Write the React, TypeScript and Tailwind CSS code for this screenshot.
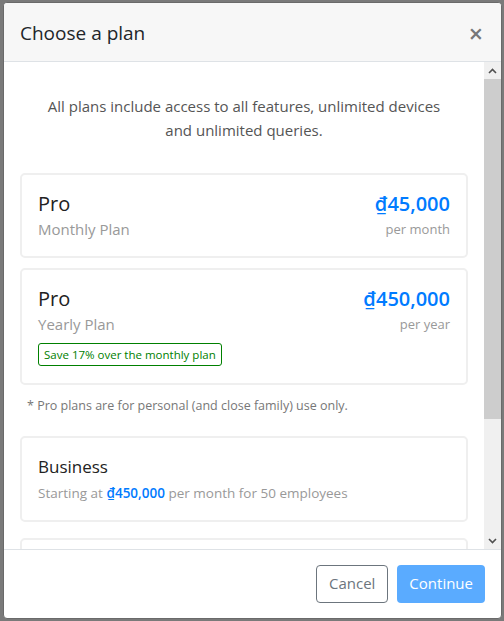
import React from "react";

const font = { fontFamily: '"Open Sans", "Noto Sans", sans-serif' };

function ScrollBar() {
  return (
    <div className="w-[17px] shrink-0 bg-[#f0f0f0] flex flex-col">
      <div className="h-[17px] flex items-center justify-center">
        <svg width="9" height="6" viewBox="0 0 9 6"><path d="M1 5 L4.5 1.5 L8 5" stroke="#505050" strokeWidth="1.6" fill="none" /></svg>
      </div>
      <div className="h-[340px] bg-[#cdcdcd]" />
      <div className="flex-1" />
      <div className="h-[17px] flex items-center justify-center">
        <svg width="9" height="6" viewBox="0 0 9 6"><path d="M1 1 L4.5 4.5 L8 1" stroke="#505050" strokeWidth="1.6" fill="none" /></svg>
      </div>
    </div>
  );
}

export default function App() {
  return (
    <div className="h-[621px] w-[504px] bg-[#7a7a7a] pt-[2px] pl-[3px] overflow-hidden" style={font}>
      <div className="w-[499px] h-[617px] bg-white border border-[#6a6a6a] rounded-[4px] flex flex-col overflow-hidden">
        <div className="h-[59px] shrink-0 bg-[#f7f7f7] border-b border-[#dee2e6] flex items-center justify-between pl-[16px] pr-[16px]">
          <div className="text-[19px] text-[#212529] leading-[28px] pt-[2px]">Choose a plan</div>
          <div className="text-[25px] text-[#777] leading-none font-semibold pr-[2px] pt-[2px]">×</div>
        </div>
        <div className="h-[487px] shrink-0 flex">
          <div className="flex-1 overflow-hidden px-[16px]">
            <p className="text-center text-[15px] leading-[24px] text-[#555] pt-[32px] pb-[31px] px-[24px]">
              All plans include access to all features, unlimited devices and unlimited queries.
            </p>
            <div className="border-2 border-[#efefef] rounded-[5px] px-[16px] pt-[16px] pb-[15px] flex justify-between mb-[10px]">
              <div>
                <div className="text-[20px] leading-[26px] text-[#222]">Pro</div>
                <div className="text-[15px] leading-[24px] text-[#999]">Monthly Plan</div>
              </div>
              <div className="text-right">
                <div className="text-[20px] leading-[26px] font-semibold text-[#007bff]">₫45,000</div>
                <div className="text-[13px] leading-[24px] text-[#999]">per month</div>
              </div>
            </div>
            <div className="border-2 border-[#efefef] rounded-[5px] px-[16px] pt-[16px] pb-[17px] mb-[10px]">
              <div className="flex justify-between">
                <div>
                  <div className="text-[20px] leading-[26px] text-[#222]">Pro</div>
                  <div className="text-[15px] leading-[24px] text-[#999]">Yearly Plan</div>
                </div>
                <div className="text-right">
                  <div className="text-[20px] leading-[26px] font-semibold text-[#007bff]">₫450,000</div>
                  <div className="text-[13px] leading-[24px] text-[#999]">per year</div>
                </div>
              </div>
              <div className="mt-[7px] inline-block border border-[#008000] rounded-[3px] px-[5px] text-[11.5px] leading-[21px] text-[#008000]">
                Save 17% over the monthly plan
              </div>
            </div>
            <div className="text-[12.5px] leading-[20px] text-[#777] pl-[7px] pt-[1px] pb-[20px]">
              * Pro plans are for personal (and close family) use only.
            </div>
            <div className="border-2 border-[#efefef] rounded-[5px] px-[16px] pt-[16px] pb-[14px] mb-[16px]">
              <div className="text-[17px] leading-[26px] text-[#222]">Business</div>
              <div className="text-[13.5px] leading-[26px] text-[#999]">
                Starting at <span className="text-[#007bff] font-semibold">₫450,000</span> per month for 50 employees
              </div>
            </div>
            <div className="border-2 border-[#efefef] rounded-[5px] h-[80px]" />
          </div>
          <ScrollBar />
        </div>
        <div className="flex-1 border-t border-[#dee2e6] flex items-center justify-end gap-[9px] pr-[16px] pb-[1px]">
          <button className="h-[38px] px-[12px] border border-[#6c757d] rounded-[4px] text-[15px] text-[#6c757d] bg-white">Cancel</button>
          <button className="h-[38px] px-[12px] rounded-[4px] text-[15px] text-white bg-[#5aabff]">Continue</button>
        </div>
      </div>
    </div>
  );
}
